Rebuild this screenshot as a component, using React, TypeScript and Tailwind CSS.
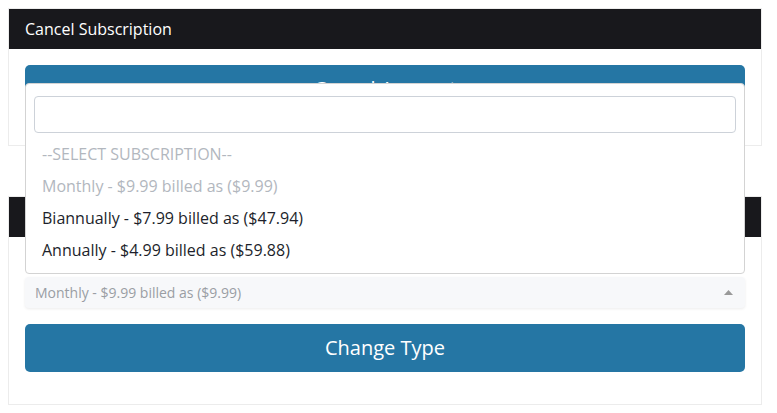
import React from 'react';

const font = { fontFamily: '"Open Sans", "Noto Sans", sans-serif' };

const options = [
  { label: '--SELECT SUBSCRIPTION--', muted: true },
  { label: 'Monthly - $9.99 billed as ($9.99)', muted: true },
  { label: 'Biannually - $7.99 billed as ($47.94)', muted: false },
  { label: 'Annually - $4.99 billed as ($59.88)', muted: false },
];

function CardHeader({ title }: { title?: string }) {
  return (
    <div className="flex h-10 items-center bg-[#18181c] px-4 text-[16px] text-white">
      {title}
    </div>
  );
}

export default function App() {
  return (
    <div className="h-[413px] w-[777px] overflow-hidden bg-white p-2" style={font}>
      {/* Card 1 */}
      <div className="w-[754px] border border-[#ececec]">
        <CardHeader title="Cancel Subscription" />
        <div className="px-4 pt-4 pb-8">
          <button className="flex h-12 w-full items-center justify-center rounded-[5px] bg-[#2576a4] text-[20px] text-white">
            Cancel Account
          </button>
        </div>
      </div>

      {/* Card 2 */}
      <div className="mt-[50px] w-[754px] border border-[#ececec]">
        <CardHeader />
        <div className="px-4 pt-10 pb-8">
          <div className="relative">
            {/* open dropdown */}
            <div className="absolute right-0 bottom-full left-0 z-10 mb-[3px] rounded-[4px] border border-[#d3d3d3] bg-white pt-3 pb-[7px]">
              <div className="px-2">
                <div className="h-[37px] rounded-[4px] border border-[#cdd2d9] bg-white" />
              </div>
              <ul className="mt-[5px] text-[16px]">
                {options.map(o => (
                  <li
                    key={o.label}
                    className={
                      'flex h-8 items-center px-4 ' +
                      (o.muted ? 'text-[#b2b7be]' : 'text-[#1d1f2b]')
                    }
                  >
                    {o.label}
                  </li>
                ))}
              </ul>
            </div>

            <div className="flex h-[31px] items-center justify-between rounded-[4px] bg-[#f7f8fa] pr-3 pl-[10px] text-[14px] text-[#9a9ea4] shadow-[0_1px_3px_rgba(0,0,0,0.08)]">
              <span>Monthly - $9.99 billed as ($9.99)</span>
              <svg width="9" height="5" viewBox="0 0 9 5" className="mb-[1px]">
                <path d="M0 5 L4.5 0 L9 5 Z" fill="#999" />
              </svg>
            </div>
          </div>

          <button className="mt-4 flex h-12 w-full items-center justify-center rounded-[5px] bg-[#2576a4] text-[20px] text-white">
            Change Type
          </button>
        </div>
      </div>
    </div>
  );
}
